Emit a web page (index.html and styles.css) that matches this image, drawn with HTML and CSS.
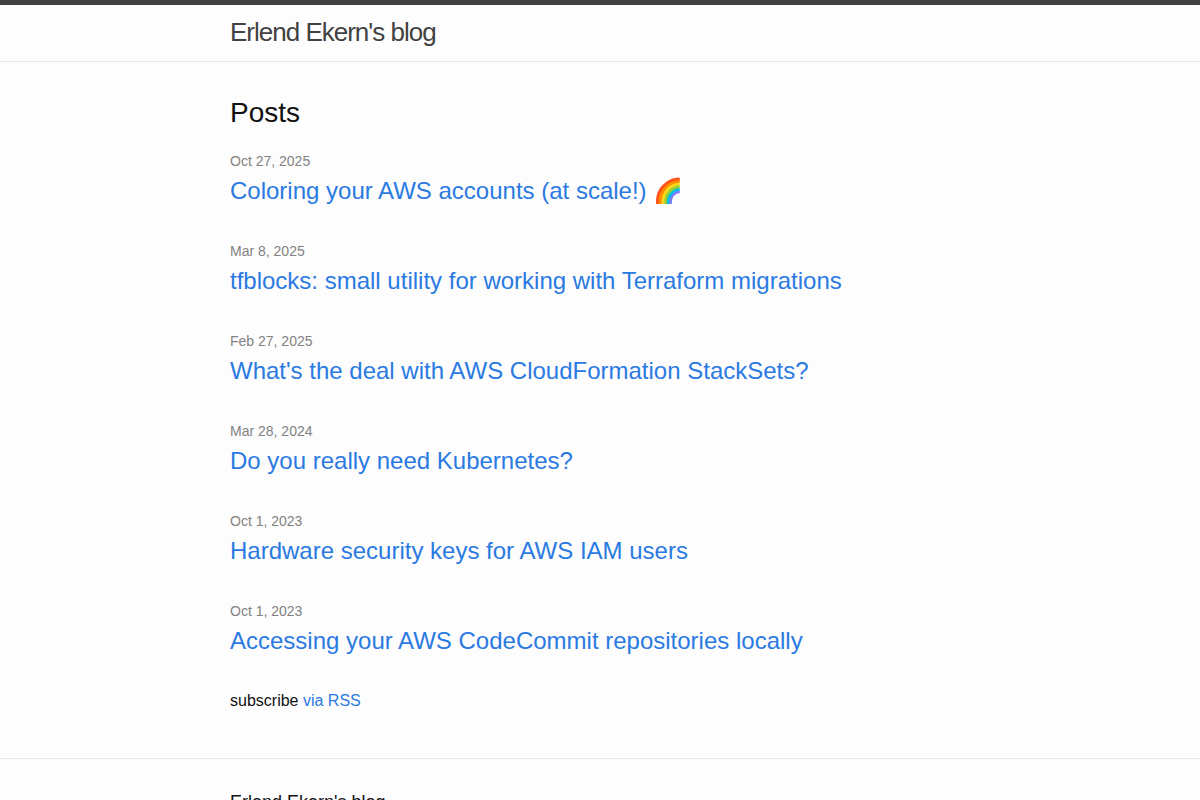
FILE: index.html
```html
<!DOCTYPE html>
<html lang="en">
<head>
<meta charset="utf-8">
<title>Erlend Ekern's blog</title>
<link rel="stylesheet" href="styles.css">
</head>
<body>
<header class="site-header">
  <div class="wrapper"><a class="site-title" href="#">Erlend Ekern's blog</a></div>
</header>
<main class="page-content">
  <div class="wrapper">
    <h2 class="post-list-heading">Posts</h2>
    <ul class="post-list">
      <li><span class="post-meta">Oct 27, 2025</span><h3><a class="post-link" href="#">Coloring your AWS accounts (at scale!) 🌈</a></h3></li>
      <li><span class="post-meta">Mar 8, 2025</span><h3><a class="post-link" href="#">tfblocks: small utility for working with Terraform migrations</a></h3></li>
      <li><span class="post-meta">Feb 27, 2025</span><h3><a class="post-link" href="#">What's the deal with AWS CloudFormation StackSets?</a></h3></li>
      <li><span class="post-meta">Mar 28, 2024</span><h3><a class="post-link" href="#">Do you really need Kubernetes?</a></h3></li>
      <li><span class="post-meta">Oct 1, 2023</span><h3><a class="post-link" href="#">Hardware security keys for AWS IAM users</a></h3></li>
      <li><span class="post-meta">Oct 1, 2023</span><h3><a class="post-link" href="#">Accessing your AWS CodeCommit repositories locally</a></h3></li>
    </ul>
    <p class="rss-subscribe">subscribe <a href="#">via RSS</a></p>
  </div>
</main>
<footer class="site-footer">
  <div class="wrapper"><h2 class="footer-heading">Erlend Ekern's blog</h2></div>
</footer>
</body>
</html>
```
FILE: styles.css
```css
* { box-sizing: border-box; }
body, h2, h3, p, ul { margin: 0; padding: 0; font-weight: 400; }
body {
  font-family: "Liberation Sans", Arial, sans-serif;
  font-size: 16px;
  line-height: 24px;
  color: #111;
  background: #fdfdfd;
}
a { color: #2a7ae2; text-decoration: none; }
a:hover { color: #111; text-decoration: underline; }
.wrapper { max-width: 800px; margin: 0 auto; padding: 0 30px; }
.site-header { border-top: 5px solid #424242; border-bottom: 1px solid #e8e8e8; }
.site-title {
  display: inline-block;
  font-size: 26px;
  line-height: 54px;
  letter-spacing: -1px;
  color: #424242;
  vertical-align: top;
}
.site-header .wrapper { min-height: 56px; }
.page-content { padding: 30px 0; }
.post-list-heading { font-size: 28px; line-height: 42px; margin-bottom: 15px; }
.post-list { list-style: none; }
.post-list li { margin-bottom: 30px; }
.post-meta { display: block; font-size: 14px; line-height: 24px; color: #828282; }
.post-link { display: block; font-size: 24px; line-height: 36px; }
.rss-subscribe { margin-bottom: 15px; }
.site-footer { border-top: 1px solid #e8e8e8; padding: 30px 0; }
.footer-heading { font-size: 18px; line-height: 27px; margin-bottom: 15px; }
```
